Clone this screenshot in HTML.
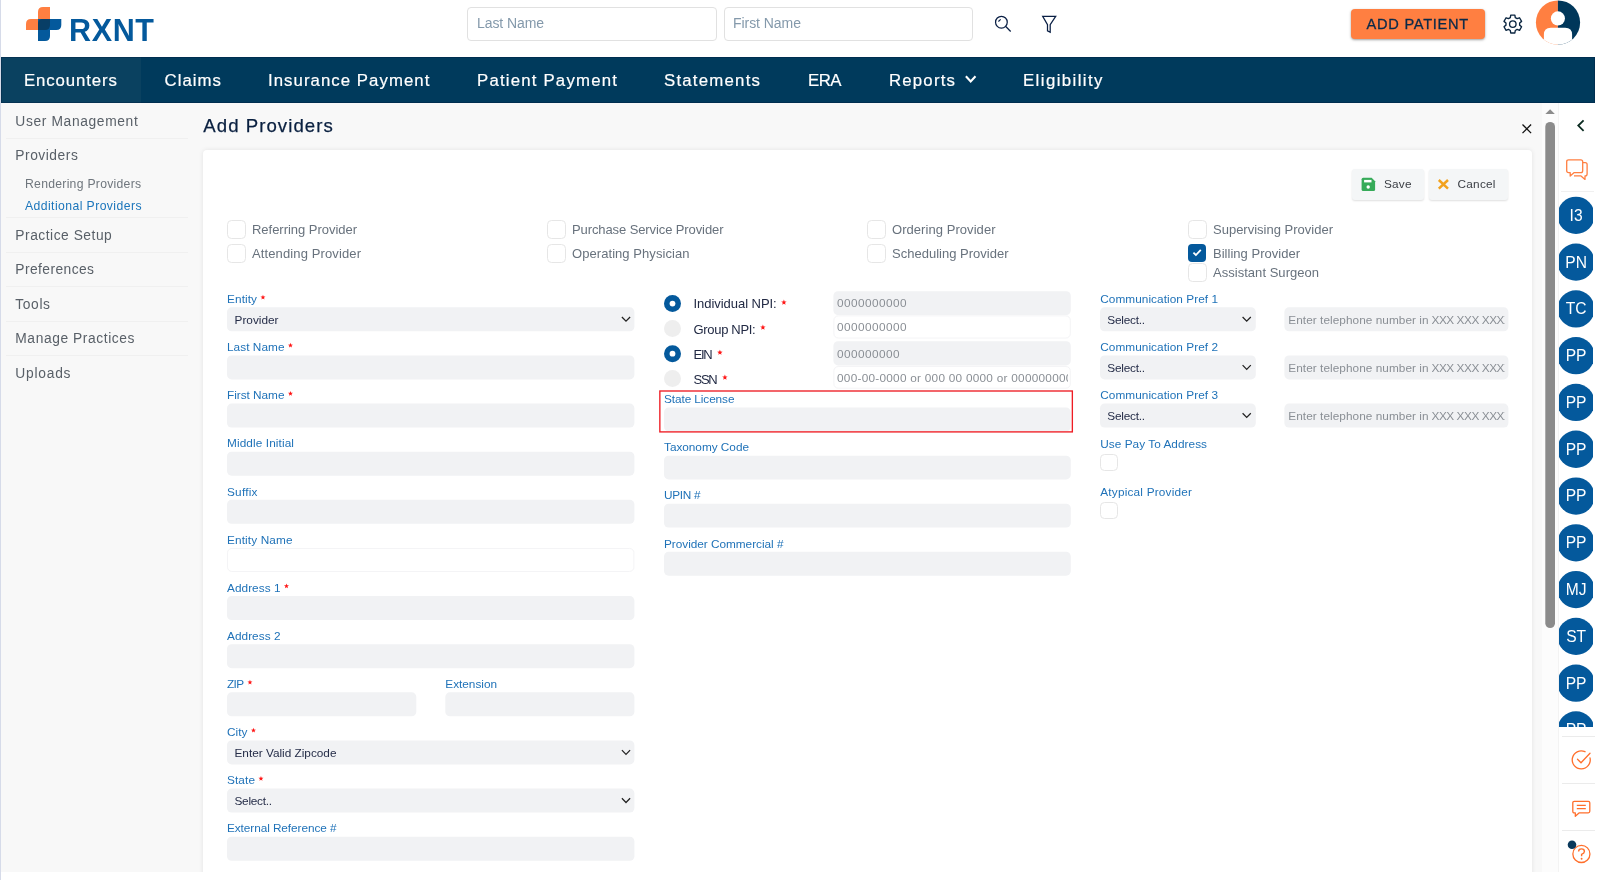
<!DOCTYPE html>
<html><head><meta charset="utf-8"><title>RXNT - Add Providers</title>
<style>
html,body{margin:0;padding:0;background:#fff;}
body{width:1600px;height:880px;overflow:hidden;font-family:"Liberation Sans",sans-serif;}
#root{will-change:transform;position:relative;width:1600px;height:880px;overflow:hidden;background:#fff;}
.t{position:absolute;white-space:nowrap;line-height:1;}
.b{position:absolute;box-sizing:border-box;}
.in{background:#f1f2f4;border-radius:5px;}
.inw{background:#fff;border:1px solid #f5f5f7;border-radius:5px;}
.cb{background:#fff;border:1px solid #dcdcdc;border-radius:4px;}
.sep{background:#ececec;}
.av{background:#04599c;border-radius:50%;}
svg{position:absolute;overflow:visible;}

</style></head>
<body>
<div id="root">
<div class="b" style="left:0px;top:0px;width:1px;height:880px;background:#d6dbe9;"></div>
<div class="b" style="left:1px;top:103px;width:1558px;height:769px;background:#f8f8f8;"></div>
<svg style="left:0;top:0" width="1" height="1"><g transform="translate(26.000,7.000)">
<path d="M12 5 Q12 0 17 0 H24 V23 H0 V17 Q0 12 5 12 H12 Z" fill="#ff7f41"/>
<path d="M12 12 H35.3 V18 Q35.3 23 30.3 23 H24 V29 Q24 34 19 34 H12 Z" fill="#04599c"/>
<path d="M12 17 Q12 12 17 12 H24 V18 Q24 23 19 23 H12 Z" fill="#083e66"/>
</g></svg>
<span class="t" style="left:69.00px;top:15.00px;font-size:30.5px;color:#04599c;letter-spacing:0.657px;font-weight:bold;">RXNT</span>
<div class="b" style="left:467px;top:7px;width:249.5px;height:34px;background:#fff;border:1px solid #e1e1e1;border-radius:4px;"></div>
<div class="b" style="left:724px;top:7px;width:249px;height:34px;background:#fff;border:1px solid #e1e1e1;border-radius:4px;"></div>
<span class="t" style="left:477.00px;top:16.00px;font-size:14px;color:#8499ab;letter-spacing:-0.087px;">Last Name</span>
<span class="t" style="left:733.00px;top:16.00px;font-size:14px;color:#8499ab;letter-spacing:-0.050px;">First Name</span>
<svg style="left:0;top:0" width="1" height="1" fill="none" stroke="#0a1f44" stroke-width="1.25"><g transform="translate(0.000,0.000)">
<circle cx="1001.4" cy="22.2" r="5.85"/><path d="M1005.5 26.3 L1010.7 31.5"/><path d="M998.4 21.5 L1000.7 19.4" stroke-width="1.1"/></g></svg>
<svg style="left:0;top:0" width="1" height="1" fill="none" stroke="#0a1f44" stroke-width="1.25" stroke-linejoin="miter"><g transform="translate(0.000,0.000)">
<path d="M1042.7 16.35 H1055.7 L1050.2 24.6 V32.2 L1047.5 30.9 V24.6 Z"/></g></svg>
<div class="b" style="left:1351px;top:9px;width:134px;height:30px;background:#ff7f41;border-radius:4px;box-shadow:0 1px 2.5px rgba(0,0,0,.38);"></div>
<span class="t" style="left:1366.60px;top:17.00px;font-size:14.6px;color:#0a2a4a;letter-spacing:0.733px;-webkit-text-stroke:0.3px #0a2a4a;">ADD PATIENT</span>
<svg style="left:0;top:0" width="1" height="1" fill="none" stroke="#0a2540" stroke-width="1.35" stroke-linejoin="round"><g transform="translate(1502.800,13.850)">
<circle cx="10" cy="10.2" r="3.25"/>
<path d="M7.53 3.76 L7.93 1.24 L12.07 1.24 L12.47 3.76 L14.34 4.84 L16.73 3.93 L18.80 7.51 L16.82 9.12 L16.82 11.28 L18.80 12.89 L16.73 16.47 L14.34 15.56 L12.47 16.64 L12.07 19.16 L7.93 19.16 L7.53 16.64 L5.66 15.56 L3.27 16.47 L1.20 12.89 L3.18 11.28 L3.18 9.12 L1.20 7.51 L3.27 3.93 L5.66 4.84 Z"/></g></svg>
<svg style="left:0;top:0" width="1" height="1"><g transform="translate(1535.900,0.300)">
<defs><clipPath id="avc"><circle cx="22.1" cy="22.2" r="22.1"/></clipPath></defs>
<g clip-path="url(#avc)"><rect x="-1" y="-1" width="23" height="47" fill="#ff7f41"/><rect x="22" y="-1" width="24" height="47" fill="#00375a"/>
<circle cx="22" cy="18.1" r="7.05" fill="#fff"/><path d="M8 46 V34.4 Q8 27.5 14.9 27.5 H29.3 Q36.2 27.5 36.2 34.4 V46 Z" fill="#fff"/></g></g></svg>
<div class="b" style="left:1px;top:57px;width:1594px;height:46px;background:#003a5c;"></div>
<div class="b" style="left:1px;top:57px;width:140px;height:46px;background:#0a4160;"></div>
<div class="b" style="left:1px;top:57px;width:1594px;height:46px;box-shadow:inset 0 0 0 1px rgba(0,22,55,.32);"></div>
<span class="t" style="left:24.00px;top:73.00px;font-size:16.8px;color:#fff;letter-spacing:0.890px;-webkit-text-stroke:0.2px #fff;">Encounters</span>
<span class="t" style="left:164.50px;top:73.00px;font-size:16.8px;color:#fff;letter-spacing:1.033px;-webkit-text-stroke:0.2px #fff;">Claims</span>
<span class="t" style="left:268.00px;top:73.00px;font-size:16.8px;color:#fff;letter-spacing:1.047px;-webkit-text-stroke:0.2px #fff;">Insurance Payment</span>
<span class="t" style="left:477.00px;top:73.00px;font-size:16.8px;color:#fff;letter-spacing:1.195px;-webkit-text-stroke:0.2px #fff;">Patient Payment</span>
<span class="t" style="left:664.00px;top:73.00px;font-size:16.8px;color:#fff;letter-spacing:1.225px;-webkit-text-stroke:0.2px #fff;">Statements</span>
<span class="t" style="left:808.00px;top:73.00px;font-size:16.8px;color:#fff;letter-spacing:-0.523px;-webkit-text-stroke:0.2px #fff;">ERA</span>
<span class="t" style="left:889.00px;top:73.00px;font-size:16.8px;color:#fff;letter-spacing:1.196px;-webkit-text-stroke:0.2px #fff;">Reports</span>
<span class="t" style="left:1023.00px;top:73.00px;font-size:16.8px;color:#fff;letter-spacing:1.414px;-webkit-text-stroke:0.2px #fff;">Eligibility</span>
<svg style="left:0;top:0" width="1" height="1" fill="none" stroke="#fff" stroke-width="2.1"><g transform="translate(964.900,74.800)"><path d="M1 1.5 L5.8 6.7 L10.6 1.5"/></g></svg>
<span class="t" style="left:15.30px;top:115.00px;font-size:13.8px;color:#596068;letter-spacing:0.641px;">User Management</span>
<span class="t" style="left:15.30px;top:149.00px;font-size:13.8px;color:#596068;letter-spacing:0.526px;">Providers</span>
<span class="t" style="left:15.30px;top:229.00px;font-size:13.8px;color:#596068;letter-spacing:0.519px;">Practice Setup</span>
<span class="t" style="left:15.30px;top:263.00px;font-size:13.8px;color:#596068;letter-spacing:0.429px;">Preferences</span>
<span class="t" style="left:15.30px;top:298.00px;font-size:13.8px;color:#596068;letter-spacing:0.621px;">Tools</span>
<span class="t" style="left:15.30px;top:332.00px;font-size:13.8px;color:#596068;letter-spacing:0.583px;">Manage Practices</span>
<span class="t" style="left:15.30px;top:367.00px;font-size:13.8px;color:#596068;letter-spacing:0.761px;">Uploads</span>
<span class="t" style="left:25.00px;top:178.00px;font-size:12.2px;color:#6f767d;letter-spacing:0.277px;">Rendering Providers</span>
<span class="t" style="left:25.00px;top:200.00px;font-size:12.2px;color:#1b75bb;letter-spacing:0.426px;">Additional Providers</span>
<div class="b" style="left:5.5px;top:138.2px;width:182.8px;height:1.0px;background:#f0f0f0;"></div>
<div class="b" style="left:5.5px;top:217px;width:182.8px;height:1px;background:#f0f0f0;"></div>
<div class="b" style="left:5.5px;top:252px;width:182.8px;height:1px;background:#f0f0f0;"></div>
<div class="b" style="left:5.5px;top:286px;width:182.8px;height:1px;background:#f0f0f0;"></div>
<div class="b" style="left:5.5px;top:320.5px;width:182.8px;height:1.0px;background:#f0f0f0;"></div>
<div class="b" style="left:5.5px;top:355px;width:182.8px;height:1px;background:#f0f0f0;"></div>
<span class="t" style="left:203.30px;top:117.00px;font-size:18.6px;color:#0a2040;letter-spacing:1.056px;-webkit-text-stroke:0.25px #0a2040;">Add Providers</span>
<svg style="left:0;top:0" width="1" height="1" fill="none" stroke="#111" stroke-width="1.3"><g transform="translate(1521.800,123.800)"><path d="M0.7 0.7 L9.3 9.3 M9.3 0.7 L0.7 9.3"/></g></svg>
<div class="b" style="left:203px;top:150px;width:1329px;height:730px;background:#fff;border-radius:4px 4px 0 0;box-shadow:0 0 5px rgba(0,0,0,.09);"></div>
<div class="b" style="left:0px;top:872px;width:1600px;height:8px;background:#fff;"></div>
<div class="b" style="left:0px;top:872px;width:1px;height:8px;background:#d6dbe9;"></div>
<div class="b" style="left:1352.4px;top:169px;width:71.59999999999991px;height:30.69999999999999px;background:#f4f6f7;border-radius:3px;box-shadow:0 1px 2px rgba(0,0,0,.13);"></div>
<div class="b" style="left:1429px;top:169px;width:79.20000000000005px;height:30.69999999999999px;background:#f4f6f7;border-radius:3px;box-shadow:0 1px 2px rgba(0,0,0,.13);"></div>
<svg style="left:0;top:0" width="1" height="1"><g transform="translate(1361.600,177.800)"><path d="M1.5 0 H10 L13.5 3.5 V11.7 Q13.5 13.2 12 13.2 H1.5 Q0 13.2 0 11.7 V1.5 Q0 0 1.5 0 Z" fill="#36ab59"/><rect x="2.5" y="2.1" width="7.4" height="2.5" fill="#fff"/><circle cx="6.6" cy="9.2" r="1.7" fill="#fff"/></g></svg>
<span class="t" style="left:1384.00px;top:179.00px;font-size:11.8px;color:#3a3e44;letter-spacing:0.201px;">Save</span>
<svg style="left:0;top:0" width="1" height="1" fill="none" stroke="#f2a21e" stroke-width="2.5"><g transform="translate(1437.900,179.100)"><path d="M0.9 0.9 L10.1 9.5 M10.1 0.9 L0.9 9.5"/></g></svg>
<span class="t" style="left:1457.50px;top:179.00px;font-size:11.8px;color:#3a3e44;letter-spacing:0.254px;">Cancel</span>
<div class="b" style="left:227px;top:220.2px;width:18.599999999999994px;height:18.599999999999994px;background:#fff;border:1px solid #e6e6e6;border-radius:4.5px;"></div>
<span class="t" style="left:252.00px;top:223.00px;font-size:13px;color:#68727d;letter-spacing:-0.029px;">Referring Provider</span>
<div class="b" style="left:227px;top:244px;width:18.599999999999994px;height:18.600000000000023px;background:#fff;border:1px solid #e6e6e6;border-radius:4.5px;"></div>
<span class="t" style="left:252.00px;top:247.00px;font-size:13px;color:#68727d;letter-spacing:0.120px;">Attending Provider</span>
<div class="b" style="left:547px;top:220.2px;width:18.600000000000023px;height:18.599999999999994px;background:#fff;border:1px solid #e6e6e6;border-radius:4.5px;"></div>
<span class="t" style="left:572.00px;top:223.00px;font-size:13px;color:#68727d;letter-spacing:-0.100px;">Purchase Service Provider</span>
<div class="b" style="left:547px;top:244px;width:18.600000000000023px;height:18.600000000000023px;background:#fff;border:1px solid #e6e6e6;border-radius:4.5px;"></div>
<span class="t" style="left:572.00px;top:247.00px;font-size:13px;color:#68727d;letter-spacing:0.064px;">Operating Physician</span>
<div class="b" style="left:867px;top:220.2px;width:18.600000000000023px;height:18.599999999999994px;background:#fff;border:1px solid #e6e6e6;border-radius:4.5px;"></div>
<span class="t" style="left:892.00px;top:223.00px;font-size:13px;color:#68727d;letter-spacing:0.056px;">Ordering Provider</span>
<div class="b" style="left:867px;top:244px;width:18.600000000000023px;height:18.600000000000023px;background:#fff;border:1px solid #e6e6e6;border-radius:4.5px;"></div>
<span class="t" style="left:892.00px;top:247.00px;font-size:13px;color:#68727d;letter-spacing:0.008px;">Scheduling Provider</span>
<div class="b" style="left:1188px;top:220.2px;width:18.59999999999991px;height:18.599999999999994px;background:#fff;border:1px solid #e6e6e6;border-radius:4.5px;"></div>
<span class="t" style="left:1213.00px;top:223.00px;font-size:13px;color:#68727d;letter-spacing:0.003px;">Supervising Provider</span>
<div class="b" style="left:1188px;top:244px;width:18.200000000000045px;height:18.19999999999999px;background:#04599c;border-radius:4px;"></div>
<svg style="left:0;top:0" width="1" height="1" fill="none" stroke="#fff" stroke-width="1.8"><g transform="translate(1192.600,248.900)"><path d="M0.8 3.7 L3.3 6.1 L8.2 1"/></g></svg>
<span class="t" style="left:1213.00px;top:247.00px;font-size:13px;color:#68727d;letter-spacing:0.020px;">Billing Provider</span>
<div class="b" style="left:1188px;top:263px;width:18.59999999999991px;height:18.600000000000023px;background:#fff;border:1px solid #e6e6e6;border-radius:4.5px;"></div>
<span class="t" style="left:1213.00px;top:266.00px;font-size:13px;color:#68727d;letter-spacing:0.031px;">Assistant Surgeon</span>
<span class="t" style="left:227.00px;top:294.00px;font-size:11.8px;color:#1f72b8;letter-spacing:0.098px;">Entity</span>
<svg style="left:0;top:0" width="1" height="1"><polygon points="262.97,294.75 263.61,296.47 265.44,296.55 264.01,297.69 264.50,299.45 262.97,298.44 261.44,299.45 261.93,297.69 260.50,296.55 262.33,296.47" fill="#ff1616"/></svg>
<svg style="left:0;top:0" width="1" height="1"><rect x="227.00" y="307.30" width="407.40" height="24.00" rx="4.6" fill="#f1f2f4"/></svg>
<span class="t" style="left:234.50px;top:315.00px;font-size:11.8px;color:#252d48;letter-spacing:0.008px;">Provider</span>
<svg style="left:0;top:0" width="1" height="1" fill="none" stroke="#222" stroke-width="1.25"><g transform="translate(621.300,316.300)"><path d="M0.6 0.7 L4.7 4.9 L8.8 0.7"/></g></svg>
<span class="t" style="left:227.00px;top:342.00px;font-size:11.8px;color:#1f72b8;letter-spacing:0.055px;">Last Name</span>
<svg style="left:0;top:0" width="1" height="1"><polygon points="290.47,342.87 291.11,344.59 292.94,344.67 291.51,345.81 292.00,347.57 290.47,346.56 288.94,347.57 289.43,345.81 288.00,344.67 289.83,344.59" fill="#ff1616"/></svg>
<svg style="left:0;top:0" width="1" height="1"><rect x="227.00" y="355.43" width="407.40" height="24.00" rx="4.6" fill="#f1f2f4"/></svg>
<span class="t" style="left:227.00px;top:390.00px;font-size:11.8px;color:#1f72b8;letter-spacing:-0.022px;">First Name</span>
<svg style="left:0;top:0" width="1" height="1"><polygon points="290.47,390.99 291.11,392.71 292.94,392.79 291.51,393.93 292.00,395.69 290.47,394.68 288.94,395.69 289.43,393.93 288.00,392.79 289.83,392.71" fill="#ff1616"/></svg>
<svg style="left:0;top:0" width="1" height="1"><rect x="227.00" y="403.56" width="407.40" height="24.00" rx="4.6" fill="#f1f2f4"/></svg>
<span class="t" style="left:227.00px;top:438.00px;font-size:11.8px;color:#1f72b8;letter-spacing:0.109px;">Middle Initial</span>
<svg style="left:0;top:0" width="1" height="1"><rect x="227.00" y="451.69" width="407.40" height="24.00" rx="4.6" fill="#f1f2f4"/></svg>
<span class="t" style="left:227.00px;top:487.00px;font-size:11.8px;color:#1f72b8;letter-spacing:0.240px;">Suffix</span>
<svg style="left:0;top:0" width="1" height="1"><rect x="227.00" y="499.82" width="407.40" height="24.00" rx="4.6" fill="#f1f2f4"/></svg>
<span class="t" style="left:227.00px;top:535.00px;font-size:11.8px;color:#1f72b8;letter-spacing:0.123px;">Entity Name</span>
<svg style="left:0;top:0" width="1" height="1"><rect x="227.50" y="548.45" width="406.40" height="23.00" rx="4.3" fill="#fff" stroke="#f4f4f6" stroke-width="1"/></svg>
<span class="t" style="left:227.00px;top:583.00px;font-size:11.8px;color:#1f72b8;letter-spacing:0.046px;">Address 1</span>
<svg style="left:0;top:0" width="1" height="1"><polygon points="286.47,583.47 287.11,585.19 288.94,585.27 287.51,586.41 288.00,588.17 286.47,587.16 284.94,588.17 285.43,586.41 284.00,585.27 285.83,585.19" fill="#ff1616"/></svg>
<svg style="left:0;top:0" width="1" height="1"><rect x="227.00" y="596.08" width="407.40" height="24.00" rx="4.6" fill="#f1f2f4"/></svg>
<span class="t" style="left:227.00px;top:631.00px;font-size:11.8px;color:#1f72b8;letter-spacing:0.046px;">Address 2</span>
<svg style="left:0;top:0" width="1" height="1"><rect x="227.00" y="644.21" width="407.40" height="24.00" rx="4.6" fill="#f1f2f4"/></svg>
<span class="t" style="left:227.00px;top:679.00px;font-size:11.8px;color:#1f72b8;letter-spacing:-0.679px;">ZIP</span>
<svg style="left:0;top:0" width="1" height="1"><polygon points="249.97,679.71 250.61,681.43 252.44,681.51 251.01,682.65 251.50,684.41 249.97,683.40 248.44,684.41 248.93,682.65 247.50,681.51 249.33,681.43" fill="#ff1616"/></svg>
<svg style="left:0;top:0" width="1" height="1"><rect x="227.00" y="692.34" width="189.30" height="24.00" rx="4.6" fill="#f1f2f4"/></svg>
<span class="t" style="left:445.30px;top:679.00px;font-size:11.8px;color:#1f72b8;letter-spacing:-0.015px;">Extension</span>
<svg style="left:0;top:0" width="1" height="1"><rect x="445.30" y="692.34" width="189.10" height="24.00" rx="4.6" fill="#f1f2f4"/></svg>
<span class="t" style="left:227.00px;top:727.00px;font-size:11.8px;color:#1f72b8;letter-spacing:0.059px;">City</span>
<svg style="left:0;top:0" width="1" height="1"><polygon points="253.47,727.83 254.11,729.55 255.94,729.63 254.51,730.77 255.00,732.53 253.47,731.52 251.94,732.53 252.43,730.77 251.00,729.63 252.83,729.55" fill="#ff1616"/></svg>
<svg style="left:0;top:0" width="1" height="1"><rect x="227.00" y="740.47" width="407.40" height="24.00" rx="4.6" fill="#f1f2f4"/></svg>
<span class="t" style="left:234.50px;top:748.00px;font-size:11.8px;color:#252d48;letter-spacing:-0.006px;">Enter Valid Zipcode</span>
<svg style="left:0;top:0" width="1" height="1" fill="none" stroke="#222" stroke-width="1.25"><g transform="translate(621.300,749.470)"><path d="M0.6 0.7 L4.7 4.9 L8.8 0.7"/></g></svg>
<span class="t" style="left:227.00px;top:775.00px;font-size:11.8px;color:#1f72b8;letter-spacing:0.112px;">State</span>
<svg style="left:0;top:0" width="1" height="1"><polygon points="260.97,775.95 261.61,777.67 263.44,777.75 262.01,778.89 262.50,780.65 260.97,779.64 259.44,780.65 259.93,778.89 258.50,777.75 260.33,777.67" fill="#ff1616"/></svg>
<svg style="left:0;top:0" width="1" height="1"><rect x="227.00" y="788.60" width="407.40" height="24.00" rx="4.6" fill="#f1f2f4"/></svg>
<span class="t" style="left:234.50px;top:796.00px;font-size:11.8px;color:#252d48;letter-spacing:-0.265px;">Select..</span>
<svg style="left:0;top:0" width="1" height="1" fill="none" stroke="#222" stroke-width="1.25"><g transform="translate(621.300,797.600)"><path d="M0.6 0.7 L4.7 4.9 L8.8 0.7"/></g></svg>
<span class="t" style="left:227.00px;top:823.00px;font-size:11.8px;color:#1f72b8;letter-spacing:-0.071px;">External Reference #</span>
<svg style="left:0;top:0" width="1" height="1"><rect x="227.00" y="836.73" width="407.40" height="24.00" rx="4.6" fill="#f1f2f4"/></svg>
<svg style="left:0;top:0" width="1" height="1"><g transform="translate(663.500,294.600)"><circle cx="9" cy="9" r="8.5" fill="#04599c"/><circle cx="9" cy="9" r="2.9" fill="#fff"/></g></svg>
<span class="t" style="left:693.50px;top:297.00px;font-size:13px;color:#222a44;letter-spacing:-0.044px;">Individual NPI:</span>
<svg style="left:0;top:0" width="1" height="1"><polygon points="783.91,299.60 784.61,301.48 786.62,301.57 785.05,302.82 785.58,304.76 783.91,303.65 782.23,304.76 782.77,302.82 781.20,301.57 783.20,301.48" fill="#ff1616"/></svg>
<svg style="left:0;top:0" width="1" height="1"><rect x="833.40" y="291.20" width="237.40" height="23.80" rx="4.6" fill="#f1f2f4"/></svg>
<span class="t" style="left:837.00px;top:298.00px;font-size:11.8px;color:#8a8f95;letter-spacing:0.430px;">0000000000</span>
<svg style="left:0;top:0" width="1" height="1"><g transform="translate(663.500,319.600)"><circle cx="9" cy="9" r="8.5" fill="#eeeeee"/></g></svg>
<span class="t" style="left:693.50px;top:323.00px;font-size:13px;color:#222a44;letter-spacing:-0.314px;">Group NPI:</span>
<svg style="left:0;top:0" width="1" height="1"><polygon points="762.91,324.60 763.61,326.48 765.62,326.57 764.05,327.82 764.58,329.76 762.91,328.65 761.23,329.76 761.77,327.82 760.20,326.57 762.20,326.48" fill="#ff1616"/></svg>
<svg style="left:0;top:0" width="1" height="1"><rect x="833.90" y="315.90" width="236.40" height="22.10" rx="4.3" fill="#fff" stroke="#f4f4f6" stroke-width="1"/></svg>
<span class="t" style="left:837.00px;top:322.00px;font-size:11.8px;color:#8a8f95;letter-spacing:0.430px;">0000000000</span>
<svg style="left:0;top:0" width="1" height="1"><g transform="translate(663.500,344.700)"><circle cx="9" cy="9" r="8.5" fill="#04599c"/><circle cx="9" cy="9" r="2.9" fill="#fff"/></g></svg>
<span class="t" style="left:693.50px;top:348.00px;font-size:13px;color:#222a44;letter-spacing:-1.236px;">EIN</span>
<svg style="left:0;top:0" width="1" height="1"><polygon points="719.91,349.70 720.61,351.58 722.62,351.67 721.05,352.92 721.58,354.86 719.91,353.75 718.23,354.86 718.77,352.92 717.20,351.67 719.20,351.58" fill="#ff1616"/></svg>
<svg style="left:0;top:0" width="1" height="1"><rect x="833.40" y="341.20" width="237.40" height="24.20" rx="4.6" fill="#f1f2f4"/></svg>
<span class="t" style="left:837.00px;top:349.00px;font-size:11.8px;color:#8a8f95;letter-spacing:0.429px;">000000000</span>
<svg style="left:0;top:0" width="1" height="1"><g transform="translate(663.500,369.600)"><circle cx="9" cy="9" r="8.5" fill="#eeeeee"/></g></svg>
<span class="t" style="left:693.50px;top:373.00px;font-size:13px;color:#222a44;letter-spacing:-1.266px;">SSN</span>
<svg style="left:0;top:0" width="1" height="1"><polygon points="724.91,374.60 725.61,376.48 727.62,376.57 726.05,377.82 726.58,379.76 724.91,378.65 723.23,379.76 723.77,377.82 722.20,376.57 724.20,376.48" fill="#ff1616"/></svg>
<svg style="left:0;top:0" width="1" height="1"><rect x="833.90" y="366.50" width="236.40" height="21.70" rx="4.3" fill="#fff" stroke="#f4f4f6" stroke-width="1"/></svg>
<span class="t" style="left:837.00px;top:373.00px;font-size:11.8px;color:#8a8f95;letter-spacing:0.255px;width:230.6px;overflow:hidden;">000-00-0000 or 000 00 0000 or 000000000</span>
<span class="t" style="left:664.00px;top:394.00px;font-size:11.8px;color:#1f72b8;letter-spacing:-0.084px;">State License</span>
<svg style="left:0;top:0" width="1" height="1"><rect x="664.00" y="407.55" width="406.80" height="23.80" rx="4.6" fill="#f1f2f4"/></svg>
<span class="t" style="left:664.00px;top:442.00px;font-size:11.8px;color:#1f72b8;letter-spacing:-0.022px;">Taxonomy Code</span>
<svg style="left:0;top:0" width="1" height="1"><rect x="664.00" y="455.65" width="406.80" height="23.80" rx="4.6" fill="#f1f2f4"/></svg>
<span class="t" style="left:664.00px;top:490.00px;font-size:11.8px;color:#1f72b8;letter-spacing:-0.307px;">UPIN #</span>
<svg style="left:0;top:0" width="1" height="1"><rect x="664.00" y="503.75" width="406.80" height="23.80" rx="4.6" fill="#f1f2f4"/></svg>
<span class="t" style="left:664.00px;top:539.00px;font-size:11.8px;color:#1f72b8;letter-spacing:-0.025px;">Provider Commercial #</span>
<svg style="left:0;top:0" width="1" height="1"><rect x="664.00" y="551.85" width="406.80" height="23.80" rx="4.6" fill="#f1f2f4"/></svg>
<svg style="left:0;top:0" width="1" height="1"><rect x="659.85" y="391.0" width="412.5" height="40.9" fill="none" stroke="#ee1c24" stroke-width="1.35"/></svg>
<span class="t" style="left:1100.30px;top:294.00px;font-size:11.8px;color:#1f72b8;letter-spacing:0.050px;">Communication Pref 1</span>
<svg style="left:0;top:0" width="1" height="1"><rect x="1100.00" y="307.30" width="155.80" height="24.00" rx="4.6" fill="#f1f2f4"/></svg>
<span class="t" style="left:1107.30px;top:315.00px;font-size:11.8px;color:#252d48;letter-spacing:-0.236px;">Select..</span>
<svg style="left:0;top:0" width="1" height="1" fill="none" stroke="#222" stroke-width="1.25"><g transform="translate(1242.000,316.300)"><path d="M0.6 0.7 L4.7 4.9 L8.8 0.7"/></g></svg>
<svg style="left:0;top:0" width="1" height="1"><rect x="1284.40" y="307.30" width="224.00" height="24.00" rx="4.6" fill="#f1f2f4"/></svg>
<span class="t" style="left:1288.30px;top:315.00px;font-size:11.8px;color:#8a8f95;letter-spacing:0.051px;">Enter telephone number in</span>
<span class="t" style="left:1431.50px;top:315.00px;font-size:11.8px;color:#8a8f95;letter-spacing:-0.440px;width:73.5px;overflow:hidden;">XXX XXX XXXX</span>
<span class="t" style="left:1100.30px;top:342.00px;font-size:11.8px;color:#1f72b8;letter-spacing:0.050px;">Communication Pref 2</span>
<svg style="left:0;top:0" width="1" height="1"><rect x="1100.00" y="355.43" width="155.80" height="24.00" rx="4.6" fill="#f1f2f4"/></svg>
<span class="t" style="left:1107.30px;top:363.00px;font-size:11.8px;color:#252d48;letter-spacing:-0.236px;">Select..</span>
<svg style="left:0;top:0" width="1" height="1" fill="none" stroke="#222" stroke-width="1.25"><g transform="translate(1242.000,364.430)"><path d="M0.6 0.7 L4.7 4.9 L8.8 0.7"/></g></svg>
<svg style="left:0;top:0" width="1" height="1"><rect x="1284.40" y="355.43" width="224.00" height="24.00" rx="4.6" fill="#f1f2f4"/></svg>
<span class="t" style="left:1288.30px;top:363.00px;font-size:11.8px;color:#8a8f95;letter-spacing:0.051px;">Enter telephone number in</span>
<span class="t" style="left:1431.50px;top:363.00px;font-size:11.8px;color:#8a8f95;letter-spacing:-0.440px;width:73.5px;overflow:hidden;">XXX XXX XXXX</span>
<span class="t" style="left:1100.30px;top:390.00px;font-size:11.8px;color:#1f72b8;letter-spacing:0.050px;">Communication Pref 3</span>
<svg style="left:0;top:0" width="1" height="1"><rect x="1100.00" y="403.56" width="155.80" height="24.00" rx="4.6" fill="#f1f2f4"/></svg>
<span class="t" style="left:1107.30px;top:411.00px;font-size:11.8px;color:#252d48;letter-spacing:-0.236px;">Select..</span>
<svg style="left:0;top:0" width="1" height="1" fill="none" stroke="#222" stroke-width="1.25"><g transform="translate(1242.000,412.560)"><path d="M0.6 0.7 L4.7 4.9 L8.8 0.7"/></g></svg>
<svg style="left:0;top:0" width="1" height="1"><rect x="1284.40" y="403.56" width="224.00" height="24.00" rx="4.6" fill="#f1f2f4"/></svg>
<span class="t" style="left:1288.30px;top:411.00px;font-size:11.8px;color:#8a8f95;letter-spacing:0.051px;">Enter telephone number in</span>
<span class="t" style="left:1431.50px;top:411.00px;font-size:11.8px;color:#8a8f95;letter-spacing:-0.440px;width:73.5px;overflow:hidden;">XXX XXX XXXX</span>
<span class="t" style="left:1100.30px;top:439.00px;font-size:11.8px;color:#1f72b8;letter-spacing:0.039px;">Use Pay To Address</span>
<div class="b" style="left:1100.2px;top:453.6px;width:17.40000000000009px;height:17.100000000000023px;background:#fff;border:1px solid #e6e6e6;border-radius:4.5px;"></div>
<span class="t" style="left:1100.30px;top:487.00px;font-size:11.8px;color:#1f72b8;letter-spacing:0.198px;">Atypical Provider</span>
<div class="b" style="left:1100.2px;top:501.8px;width:17.40000000000009px;height:17.099999999999966px;background:#fff;border:1px solid #e6e6e6;border-radius:4.5px;"></div>
<div class="b" style="left:1541.5px;top:103px;width:16.5px;height:769px;background:#fcfcfc;"></div>
<svg style="left:0;top:0" width="1" height="1"><g transform="translate(1545.400,109.300)"><path d="M0 4.8 L4.7 0 L9.4 4.8 Z" fill="#8c8c8c"/></g></svg>
<svg style="left:0;top:0" width="1" height="1"><rect x="1545.3" y="121.9" width="9.7" height="506.2" rx="4.85" fill="#8b8b8b"/></svg>
<div class="b" style="left:1558px;top:103px;width:42px;height:777px;background:#fff;"></div>
<div class="b" style="left:1558px;top:103px;width:1px;height:769px;background:#f3f3f3;"></div>
<svg style="left:0;top:0" width="1" height="1" fill="none" stroke="#0a2a20" stroke-width="1.8"><g transform="translate(1576.800,119.600)"><path d="M6.8 0.8 L1.5 6 L6.8 11.2"/></g></svg>
<svg style="left:0;top:0" width="1" height="1" fill="none" stroke="#ff7f41" stroke-width="1.3" stroke-linejoin="round"><g transform="translate(1566.000,159.000)">
<path d="M2.6 0.8 H14.8 Q16.7 0.8 16.7 2.7 V11.7 Q16.7 13.6 14.8 13.6 H8.2 L4.2 17 V13.6 H2.6 Q0.7 13.6 0.7 11.7 V2.7 Q0.7 0.8 2.6 0.8 Z"/>
<path d="M17 3.6 H19.2 Q21.1 3.6 21.1 5.5 V15 Q21.1 16.9 19.2 16.9 H19 V20.4 L15 16.9 H8"/></g></svg>
<div class="b" style="left:1561px;top:190.7px;width:33px;height:1.0px;background:#f0f0f0;"></div>
<div class="b" style="left:1559px;top:103px;width:34.4px;height:624.2px;overflow:hidden;">
<svg style="left:0;top:0" width="35" height="1"><circle cx="17.00" cy="112.35" r="18.65" fill="#04599c"/></svg>
<span class="t" style="left:10.59px;top:105px;font-size:15.6px;color:#fff;">I3</span>
<svg style="left:0;top:0" width="35" height="1"><circle cx="17.00" cy="159.13" r="18.65" fill="#04599c"/></svg>
<span class="t" style="left:6.26px;top:152px;font-size:15.6px;color:#fff;">PN</span>
<svg style="left:0;top:0" width="35" height="1"><circle cx="17.00" cy="205.91" r="18.65" fill="#04599c"/></svg>
<span class="t" style="left:6.70px;top:198px;font-size:15.6px;color:#fff;">TC</span>
<svg style="left:0;top:0" width="35" height="1"><circle cx="17.00" cy="252.69" r="18.65" fill="#04599c"/></svg>
<span class="t" style="left:6.69px;top:245px;font-size:15.6px;color:#fff;">PP</span>
<svg style="left:0;top:0" width="35" height="1"><circle cx="17.00" cy="299.47" r="18.65" fill="#04599c"/></svg>
<span class="t" style="left:6.69px;top:292px;font-size:15.6px;color:#fff;">PP</span>
<svg style="left:0;top:0" width="35" height="1"><circle cx="17.00" cy="346.25" r="18.65" fill="#04599c"/></svg>
<span class="t" style="left:6.69px;top:339px;font-size:15.6px;color:#fff;">PP</span>
<svg style="left:0;top:0" width="35" height="1"><circle cx="17.00" cy="393.03" r="18.65" fill="#04599c"/></svg>
<span class="t" style="left:6.69px;top:385px;font-size:15.6px;color:#fff;">PP</span>
<svg style="left:0;top:0" width="35" height="1"><circle cx="17.00" cy="439.81" r="18.65" fill="#04599c"/></svg>
<span class="t" style="left:6.69px;top:432px;font-size:15.6px;color:#fff;">PP</span>
<svg style="left:0;top:0" width="35" height="1"><circle cx="17.00" cy="486.59" r="18.65" fill="#04599c"/></svg>
<span class="t" style="left:6.70px;top:479px;font-size:15.6px;color:#fff;">MJ</span>
<svg style="left:0;top:0" width="35" height="1"><circle cx="17.00" cy="533.37" r="18.65" fill="#04599c"/></svg>
<span class="t" style="left:7.13px;top:526px;font-size:15.6px;color:#fff;">ST</span>
<svg style="left:0;top:0" width="35" height="1"><circle cx="17.00" cy="580.15" r="18.65" fill="#04599c"/></svg>
<span class="t" style="left:6.69px;top:573px;font-size:15.6px;color:#fff;">PP</span>
<svg style="left:0;top:0" width="35" height="1"><circle cx="17.00" cy="626.93" r="18.65" fill="#04599c"/></svg>
<span class="t" style="left:6.69px;top:619px;font-size:15.6px;color:#fff;">PP</span>
</div>
<div class="b" style="left:1562px;top:735.8px;width:33px;height:1.0px;background:#ebebeb;"></div>
<div class="b" style="left:1562px;top:783px;width:33px;height:1px;background:#ebebeb;"></div>
<div class="b" style="left:1562px;top:829.8px;width:33px;height:1.0px;background:#ebebeb;"></div>
<svg style="left:0;top:0" width="1" height="1" fill="none" stroke="#ff6f2c" stroke-width="1.3" stroke-linecap="round"><g transform="translate(1571.500,749.800)"><path d="M18.5 8 A9 9 0 1 1 13.5 1.9"/><path d="M6 9.5 L9.5 13 L18.5 3.5"/></g></svg>
<svg style="left:0;top:0" width="1" height="1" fill="none" stroke="#ff6f2c" stroke-width="1.3" stroke-linejoin="round"><g transform="translate(1571.800,800.300)"><path d="M2.5 1 H16.5 Q18 1 18 2.5 V11 Q18 12.5 16.5 12.5 H7.5 L3.5 16 V12.5 H2.5 Q1 12.5 1 11 V2.5 Q1 1 2.5 1 Z"/><path d="M5 5 H14 M5 8.3 H14"/></g></svg>
<svg style="left:0;top:0" width="1" height="1"><g transform="translate(1567.000,839.000)"><circle cx="14.4" cy="14.95" r="8.55" fill="none" stroke="#ff6f2c" stroke-width="1.3"/><path d="M11.6 12.6 Q11.6 9.9 14.5 9.9 Q17.4 9.9 17.4 12.4 Q17.4 14 14.6 15.3 V17.2" fill="none" stroke="#ff6f2c" stroke-width="1.4"/><circle cx="14.6" cy="19.7" r="0.95" fill="#ff6f2c"/><circle cx="5" cy="5.7" r="4.3" fill="#0a3a5c"/></g></svg>
</div>
</body></html>
